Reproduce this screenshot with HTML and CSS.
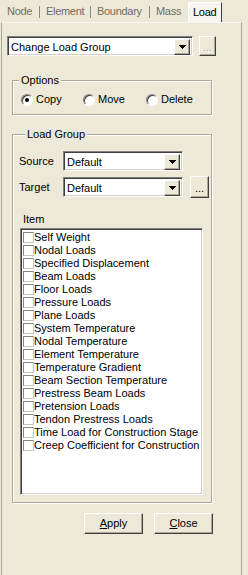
FILE: index.html
```html
<!DOCTYPE html>
<html>
<head>
<meta charset="utf-8">
<title>Load</title>
<link rel="stylesheet" href="styles.css">
</head>
<body>
<div class="tabs">
  <span class="tab t-node">Node</span><span class="sep"></span>
  <span class="tab t-element">Element</span><span class="sep"></span>
  <span class="tab t-boundary">Boundary</span><span class="sep"></span>
  <span class="tab t-mass">Mass</span>
  <span class="tab active">Load</span>
</div>
<div class="panel">
  <div class="toprow">
    <div class="combo wide">
      <span class="combo-text">Change Load Group</span>
      <span class="drop"><svg width="7" height="4" viewBox="0 0 7 4"><path d="M0 0h7v1h-1v1h-1v1h-1v1h-1v-1h-1v-1h-1v-1h-1z"/></svg></span>
    </div>
    <button class="btn dots off">...</button>
  </div>

  <fieldset class="group options">
    <legend>Options</legend>
    <div class="radios">
      <label class="radio"><span class="dot on"></span>Copy</label>
      <label class="radio"><span class="dot"></span>Move</label>
      <label class="radio"><span class="dot"></span>Delete</label>
    </div>
  </fieldset>

  <fieldset class="group loadgroup">
    <legend>Load Group</legend>
    <div class="field">
      <span class="lbl">Source</span>
      <div class="combo">
        <span class="combo-text">Default</span>
        <span class="drop"><svg width="7" height="4" viewBox="0 0 7 4"><path d="M0 0h7v1h-1v1h-1v1h-1v1h-1v-1h-1v-1h-1v-1h-1z"/></svg></span>
      </div>
    </div>
    <div class="field target">
      <span class="lbl">Target</span>
      <div class="combo">
        <span class="combo-text">Default</span>
        <span class="drop"><svg width="7" height="4" viewBox="0 0 7 4"><path d="M0 0h7v1h-1v1h-1v1h-1v1h-1v-1h-1v-1h-1v-1h-1z"/></svg></span>
      </div>
      <button class="btn dots small">...</button>
    </div>
    <div class="item-lbl">Item</div>
    <ul class="list">
      <li><span class="chk"></span>Self Weight</li>
      <li><span class="chk"></span>Nodal Loads</li>
      <li><span class="chk"></span>Specified Displacement</li>
      <li><span class="chk"></span>Beam Loads</li>
      <li><span class="chk"></span>Floor Loads</li>
      <li><span class="chk"></span>Pressure Loads</li>
      <li><span class="chk"></span>Plane Loads</li>
      <li><span class="chk"></span>System Temperature</li>
      <li><span class="chk"></span>Nodal Temperature</li>
      <li><span class="chk"></span>Element Temperature</li>
      <li><span class="chk"></span>Temperature Gradient</li>
      <li><span class="chk"></span>Beam Section Temperature</li>
      <li><span class="chk"></span>Prestress Beam Loads</li>
      <li><span class="chk"></span>Pretension Loads</li>
      <li><span class="chk"></span>Tendon Prestress Loads</li>
      <li><span class="chk"></span>Time Load for Construction Stage</li>
      <li><span class="chk"></span>Creep Coefficient for Construction</li>
    </ul>
  </fieldset>

  <div class="actions">
    <button class="btn push"><u>A</u>pply</button>
    <button class="btn push"><u>C</u>lose</button>
  </div>
</div>
</body>
</html>
```

FILE: styles.css
```css
* { box-sizing: border-box; }
html, body { margin: 0; }
body
{
 width: 248px;
 height: 575px;
 overflow: hidden;
 background: #ece9d8;
 color: #000;
 font: 11px/13px "Liberation Sans", Arial, sans-serif;
}

/* tab strip, 22px tall; widths follow the separators at 39, 90 and 149px */
.tabs
{
 display: flex;
 align-items: flex-end;
 height: 22px;
 padding-left: 7px;
}
.tab { color: #6f6d62; padding-bottom: 4px; white-space: nowrap; letter-spacing: -0.3px; }
.t-node { width: 26px; }
.t-element { width: 38px; }
.t-boundary { width: 46px; }
.t-mass { width: 23px; }
.sep { width: 1px; height: 12px; margin: 0 6px 4px; background: #8f8d81; }
.tab.active
{
 width: 34px;
 height: 20px;
 margin-left: 9px;
 padding: 3px 0 0 4px;
 color: #000;
 background: #f6f5ef;
 border-top: 1px solid #fff;
 border-left: 1px solid #fff;
 border-right: 1px solid #404040;
}

.panel
{
 margin-left: 1px;
 width: 241px;
 height: 553px;
 padding-top: 13px;
 border-top: 1px solid #f8f7f1;
 border-left: 1px solid #aca899;
 border-right: 1px solid #aca899;
}

.toprow { display: flex; gap: 6px; margin-left: 5px; }

/* classic sunken combo box */
.combo
{
 display: flex;
 width: 120px;
 height: 20px;
 padding: 2px;
 background: #fff;
 border: 1px solid;
 border-color: #808080 #fff #fff #808080;
 box-shadow: inset 1px 1px 0 #404040, inset -1px -1px 0 #d4d0c8;
}
.combo.wide { width: 186px; }
.combo-text { flex: 1; padding-left: 1px; line-height: 16px; white-space: nowrap; }
.drop
{
 display: flex;
 align-items: center;
 justify-content: center;
 width: 16px;
 height: 16px;
 background: #ece9d8;
 border: 1px solid;
 border-color: #fff #404040 #404040 #fff;
 box-shadow: inset -1px -1px 0 #aca899;
}
.drop svg { display: block; margin-left: 1px; }

/* raised push buttons */
.btn
{
 margin: 0;
 padding: 0;
 font: inherit;
 color: #000;
 background: #ece9d8;
 border: 1px solid;
 border-color: #fff #404040 #404040 #fff;
 box-shadow: inset -1px -1px 0 #aca899;
}
.dots { width: 17px; height: 20px; line-height: 13px; padding-top: 3px; }
.dots.off { color: #aca899; text-shadow: 1px 1px 0 #fff; }
.dots.small { width: 19px; height: 22px; margin-left: 7px; }

/* etched group boxes */
.group
{
 width: 200px;
 margin: 0 0 0 10px;
 padding: 0;
 min-inline-size: auto;
 border: 1px solid #aca899;
 box-shadow: 1px 1px 0 #fff, inset 1px 1px 0 #fff;
}
.group legend
{
 margin-left: 6px;
 padding: 0 2px;
 line-height: 13px;
 background: #ece9d8;
}
.options { margin-top: 18px; }
.radios
{
 display: grid;
 grid-template-columns: 62px 63px auto;
 padding: 6px 0 8px 8px;
}
.radio { display: flex; align-items: center; gap: 3px; height: 13px; }
.dot
{
 position: relative;
 width: 12px;
 height: 12px;
 border-radius: 50%;
 background: #fff;
 border: 1px solid;
 border-color: #808080 #fff #fff #808080;
 box-shadow: inset 1px 1px 0 #404040;
}
.dot.on::after
{
 content: "";
 position: absolute;
 left: 3px;
 top: 3px;
 width: 4px;
 height: 4px;
 border-radius: 50%;
 background: #000;
}

.loadgroup { margin-top: 13px; padding: 10px 0 7px 6px; }
.field { display: flex; align-items: center; }
.field.target { margin-top: 5px; }
.lbl { width: 44px; }
.item-lbl { margin-top: 15px; padding-left: 4px; }

.list
{
 list-style: none;
 width: 183px;
 height: 267px;
 margin: 2px 0 0 1px;
 padding: 2px;
 background: #fff;
 border: 1px solid;
 border-color: #808080 #fff #fff #808080;
 box-shadow: inset 1px 1px 0 #404040, inset -1px -1px 0 #d4d0c8;
}
.list li { display: flex; height: 13px; white-space: nowrap; }
.chk
{
 flex: none;
 width: 11px;
 height: 11px;
 margin-top: 1px;
 background: #fff;
 border: 1px solid;
 border-color: #8a887e #c9c7bb #c9c7bb #8a887e;
}

.actions { display: flex; gap: 11px; margin: 10px 0 0 82px; }
.push { width: 59px; height: 21px; }
```
